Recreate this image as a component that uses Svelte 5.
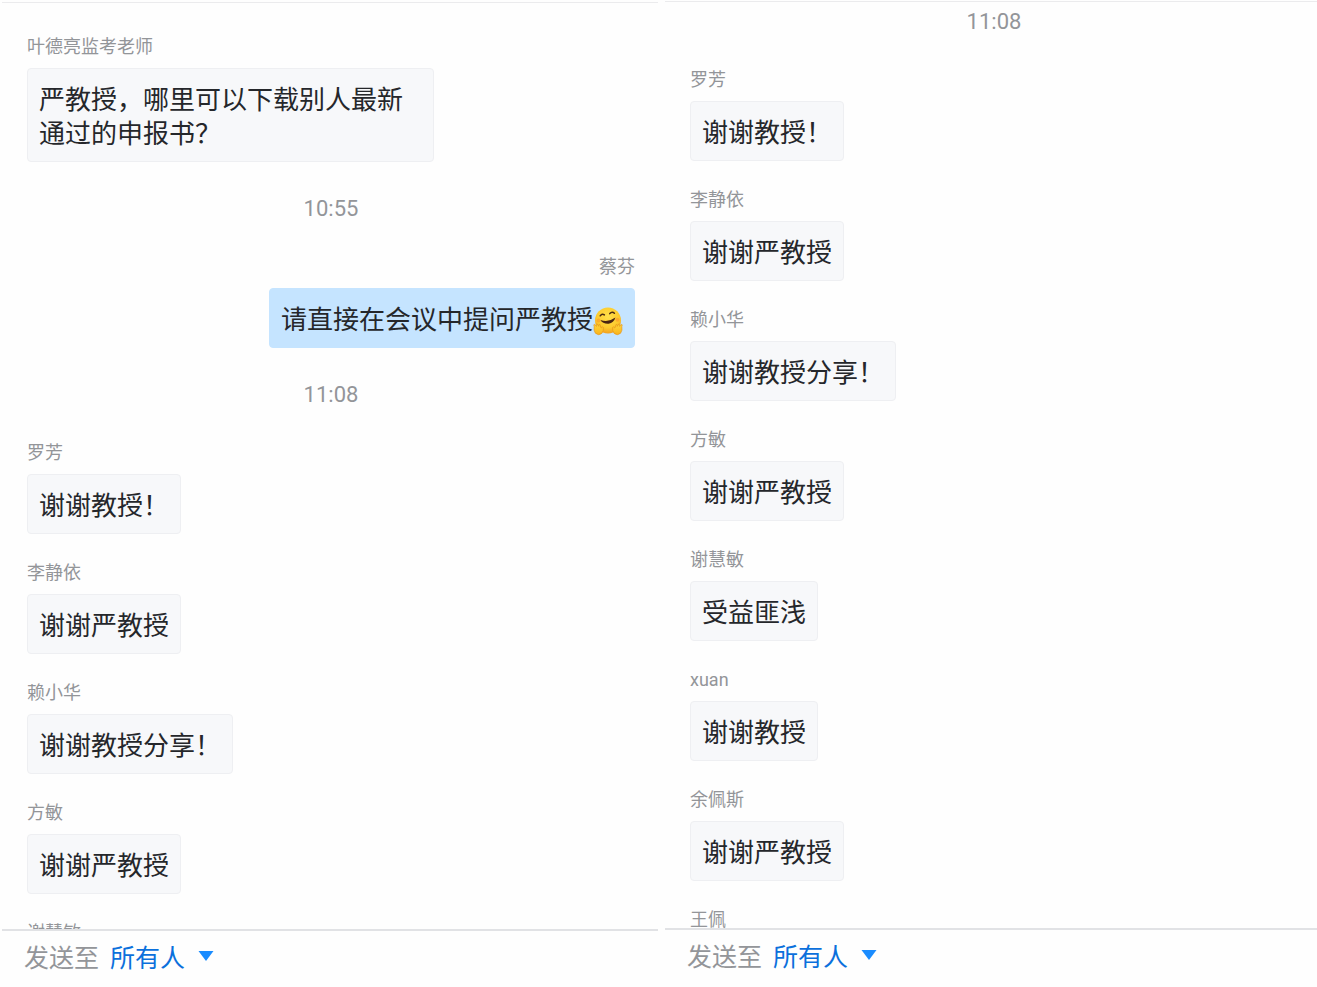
<script>
  const panes = [
    {
      id: 'earlier',
      items: [
        { type: 'message', name: '叶德亮监考老师', text: '严教授，哪里可以下载别人最新通过的申报书？' },
        { type: 'time', text: '10:55' },
        { type: 'message', name: '蔡芬', text: '请直接在会议中提问严教授', own: true, emoji: true },
        { type: 'time', text: '11:08' },
        { type: 'message', name: '罗芳', text: '谢谢教授！' },
        { type: 'message', name: '李静依', text: '谢谢严教授' },
        { type: 'message', name: '赖小华', text: '谢谢教授分享！' },
        { type: 'message', name: '方敏', text: '谢谢严教授' },
        { type: 'message', name: '谢慧敏', text: '受益匪浅' }
      ]
    },
    {
      id: 'later',
      items: [
        { type: 'time', text: '11:08' },
        { type: 'message', name: '罗芳', text: '谢谢教授！' },
        { type: 'message', name: '李静依', text: '谢谢严教授' },
        { type: 'message', name: '赖小华', text: '谢谢教授分享！' },
        { type: 'message', name: '方敏', text: '谢谢严教授' },
        { type: 'message', name: '谢慧敏', text: '受益匪浅' },
        { type: 'message', name: 'xuan', text: '谢谢教授' },
        { type: 'message', name: '余佩斯', text: '谢谢严教授' },
        { type: 'message', name: '王佩' }
      ]
    }
  ];

  let recipients = $state({ earlier: 'all', later: 'all' });
</script>

{#snippet hug()}
  <svg class="emoji" viewBox="0 0 30 30" role="img" aria-label="拥抱">
    <defs>
      <radialGradient id="face" cx="50%" cy="35%" r="65%">
        <stop offset="0" stop-color="#ffe04a" />
        <stop offset="0.65" stop-color="#fdcb2e" />
        <stop offset="1" stop-color="#f2a01f" />
      </radialGradient>
      <linearGradient id="hand" x1="0" y1="0" x2="0" y2="1">
        <stop offset="0" stop-color="#ffd83a" />
        <stop offset="1" stop-color="#f9b31c" />
      </linearGradient>
    </defs>
    <circle cx="15" cy="14.5" r="13" fill="url(#face)" />
    <path d="M7.2 9.8Q9 7 11.4 8.9M16.8 7.6Q19.2 5 21.4 7.2" fill="none" stroke="#4a2b12" stroke-width="1.5" stroke-linecap="round" />
    <path d="M7.4 14Q15.4 16.8 22.4 11.6Q20.8 17.2 15.6 17.8Q10 18.2 7.4 14Z" fill="#4a2512" />
    <circle cx="5.6" cy="14.5" r="2" fill="#fa8f2c" opacity="0.55" />
    <circle cx="24.4" cy="13.8" r="2" fill="#fa8f2c" opacity="0.55" />
    <path d="M1.2 20.4Q.2 18.2 1.6 18.4L3.4 20.4Q2.6 17.6 4 17.8L5.8 20.4Q5.4 17.8 6.8 18.4L8.2 22Q9.4 20.2 10.4 21.4Q10.8 24.8 8.8 27.4Q5.4 30 2.4 27.2Q.4 24.6 1.2 20.4Z" fill="url(#hand)" stroke="#e5951a" stroke-width="0.7" />
    <path d="M28.8 20.4Q29.8 18.2 28.4 18.4L26.6 20.4Q27.4 17.6 26 17.8L24.2 20.4Q24.6 17.8 23.2 18.4L21.8 22Q20.6 20.2 19.6 21.4Q19.2 24.8 21.2 27.4Q24.6 30 27.6 27.2Q29.6 24.6 28.8 20.4Z" fill="url(#hand)" stroke="#e5951a" stroke-width="0.7" />
  </svg>
{/snippet}

<main class="chats">
  {#each panes as pane (pane.id)}
    <section class="pane pane--{pane.id}">
      <div class="pane__list">
        {#each pane.items as item}
          {#if item.type === 'time'}
            <time class="time">{item.text}</time>
          {:else}
            <article class="message" class:message--own={item.own}>
              <span class="message__name">{item.name}</span>
              {#if item.text}
                <p class="message__bubble">{item.text}{#if item.emoji}{@render hug()}{/if}</p>
              {/if}
            </article>
          {/if}
        {/each}
      </div>
      <footer class="send">
        <label class="send__label" for="to-{pane.id}">发送至</label>
        <div class="send__picker">
          <select id="to-{pane.id}" bind:value={recipients[pane.id]}>
            <option value="all">所有人</option>
          </select>
          <svg class="send__arrow" viewBox="0 0 16 10" aria-hidden="true">
            <path d="M0.5 0H15.5L8 10Z" fill="#1a8cff" />
          </svg>
        </div>
      </footer>
    </section>
  {/each}
</main>

<style>
  :global(body) {
    margin: 0;
    overflow: hidden;
    background: #fefefe;
  }

  .chats {
    display: grid;
    grid-template-columns: 1fr 1fr;
    column-gap: 7px;
    box-sizing: border-box;
    width: calc(100% + 4px);
    height: 100vh;
    padding-left: 2px;
    font-family: Roboto, 'Noto Sans CJK SC', sans-serif;
    color: #25272b;
  }

  .pane {
    display: flex;
    flex-direction: column;
    min-width: 0;
    min-height: 0;
    box-sizing: border-box;
  }

  .pane--earlier {
    padding-top: 2px;
  }

  .pane--later {
    padding-top: 1px;
  }

  .pane__list {
    flex: 1;
    min-height: 0;
    overflow: hidden;
    padding: 4px 23px 0 25px;
    border-top: 1px solid #ebebed;
  }

  .pane--earlier .pane__list {
    padding-top: 31px;
  }

  .time {
    display: block;
    margin: 31px 0 29px;
    font-size: 22px;
    line-height: 32px;
    text-align: center;
    color: #939599;
  }

  .time:first-child {
    margin-top: 0;
  }

  .message {
    display: flex;
    flex-direction: column;
    align-items: flex-start;
    gap: 8px;
    margin-bottom: 26px;
  }

  .message--own {
    align-items: flex-end;
  }

  .message__name {
    font-size: 18px;
    line-height: 26px;
    color: #939599;
  }

  .message__bubble {
    box-sizing: border-box;
    max-width: 67%;
    margin: 0;
    padding: 14px 11px 10px;
    border: 1px solid #eeeff2;
    border-radius: 4px;
    background: #f7f8fa;
    font-size: 26px;
    line-height: 34px;
  }

  .message--own .message__bubble {
    border-color: #c5e4ff;
    background: #c5e4ff;
  }

  .emoji {
    width: 30px;
    height: 30px;
    vertical-align: -5px;
    margin: -2px 0;
  }

  .send {
    display: flex;
    align-items: center;
    gap: 11px;
    padding: 9px 22px 10px;
    border-top: 2px solid #e1e2e5;
    font-size: 25px;
    line-height: 37px;
  }

  .pane--later .send {
    padding-bottom: 11px;
  }

  .send__label {
    color: #939599;
  }

  .send__picker {
    position: relative;
    display: flex;
  }

  select {
    appearance: none;
    height: 37px;
    margin: 0;
    padding: 0 28px 0 0;
    border: 0;
    background: transparent;
    font: inherit;
    color: #0b70dc;
    cursor: pointer;
  }

  .send__arrow {
    position: absolute;
    top: 11px;
    right: 0;
    width: 16px;
    height: 10px;
    pointer-events: none;
  }
</style>
